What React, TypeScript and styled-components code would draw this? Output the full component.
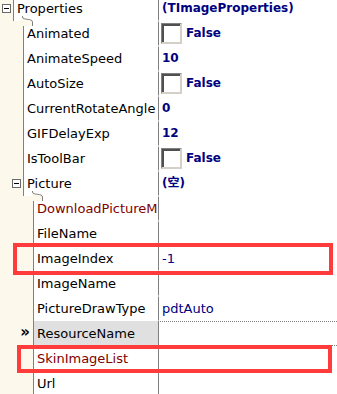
import React from "react";
import styled, { createGlobalStyle } from "styled-components";

const GlobalStyle = createGlobalStyle`
  html, body {
    margin: 0;
    padding: 0;
    background: #ffffff;
  }
  body {
    font-family: "DejaVu Sans", "Noto Sans CJK SC", sans-serif;
    font-size: 13px;
  }
`;

const Inspector = styled.div`
  position: relative;
  width: 337px;
  height: 394px;
  overflow: hidden;
  background: #ffffff;
`;

const Grid = styled.div`
  display: flex;
  flex-direction: column;
  margin-top: -4px;
`;

const Row = styled.div`
  display: flex;
  height: 25px;
  line-height: 25px;
`;

const NameSide = styled.div`
  display: flex;
  flex: 0 0 158px;
  width: 158px;
`;

const Gutter = styled.div<{ $level: number }>`
  position: relative;
  box-sizing: border-box;
  flex: 0 0 ${(p) => 13 + p.$level * 10}px;
  display: flex;
  align-items: center;
  justify-content: flex-end;
  padding-right: 2px;
  background: #fcf8ec;
`;

const Step = styled.svg`
  position: absolute;
  right: -11px;
  top: -5px;
  width: 12px;
  height: 10px;
  overflow: visible;
`;

const Expander = styled.span`
  position: relative;
  box-sizing: border-box;
  width: 9px;
  height: 9px;
  border: 1px solid #6a6a6a;
  background: #ffffff;

  &::after {
    content: "";
    position: absolute;
    left: 1px;
    right: 1px;
    top: 3px;
    height: 1px;
    background: #000000;
  }
`;

const Marker = styled.span`
  font-weight: bold;
  font-size: 15px;
  color: #000000;
  margin-right: 1px;
  line-height: 1;
  margin-top: -3px;
`;

const NameCell = styled.div<{ $red?: boolean; $selected?: boolean }>`
  flex: 1;
  min-width: 0;
  border-left: 1px solid #808080;
  padding-left: 3px;
  white-space: nowrap;
  overflow: hidden;
  color: ${(p) => (p.$red ? "#800000" : "#000000")};
  background: ${(p) => (p.$selected ? "#e0e0e0" : "#ffffff")};
`;

const ValueCell = styled.div<{ $selected?: boolean }>`
  box-sizing: border-box;
  flex: 1;
  display: flex;
  align-items: center;
  gap: 4px;
  border-left: 1px solid #808080;
  padding-left: 3px;
  white-space: nowrap;
  overflow: hidden;
  border-top: 1px dotted ${(p) => (p.$selected ? "#808080" : "transparent")};
  border-bottom: 1px dotted ${(p) => (p.$selected ? "#808080" : "transparent")};
`;

const Value = styled.span<{ $bold?: boolean }>`
  color: #000080;
  font-weight: ${(p) => (p.$bold ? "bold" : "normal")};
  font-size: ${(p) => (p.$bold ? "12px" : "13px")};
`;

const CheckBox = styled.span`
  box-sizing: border-box;
  width: 21px;
  height: 21px;
  margin-left: -1px;
  background: #ffffff;
  border-style: solid;
  border-width: 1px 2px 2px 1px;
  border-color: #808080 #d4d0c8 #d4d0c8 #808080;
  box-shadow: inset 2px 2px 0 #505050;
`;

const Annotation = styled.div<{ $top: number; $left: number; $w: number; $h: number }>`
  position: absolute;
  box-sizing: border-box;
  top: ${(p) => p.$top}px;
  left: ${(p) => p.$left}px;
  width: ${(p) => p.$w}px;
  height: ${(p) => p.$h}px;
  border: 4px solid #ff3b3b;
  pointer-events: none;
`;

type Prop = {
  name: string;
  level: number;
  value?: string;
  kind?: "bold" | "plain" | "check";
  expand?: boolean;
  red?: boolean;
  selected?: boolean;
};

const props: Prop[] = [
  { name: "Properties", level: 0, value: "(TImageProperties)", kind: "bold", expand: true },
  { name: "Animated", level: 1, value: "False", kind: "check" },
  { name: "AnimateSpeed", level: 1, value: "10", kind: "bold" },
  { name: "AutoSize", level: 1, value: "False", kind: "check" },
  { name: "CurrentRotateAngle", level: 1, value: "0", kind: "bold" },
  { name: "GIFDelayExp", level: 1, value: "12", kind: "bold" },
  { name: "IsToolBar", level: 1, value: "False", kind: "check" },
  { name: "Picture", level: 1, value: "(空)", kind: "bold", expand: true },
  { name: "DownloadPictureMode", level: 2, red: true },
  { name: "FileName", level: 2 },
  { name: "ImageIndex", level: 2, value: "-1", kind: "plain" },
  { name: "ImageName", level: 2 },
  { name: "PictureDrawType", level: 2, value: "pdtAuto", kind: "plain" },
  { name: "ResourceName", level: 2, selected: true },
  { name: "SkinImageList", level: 2, red: true },
  { name: "Url", level: 2 },
];

function StepCurve() {
  return (
    <Step viewBox="0 0 12 10">
      <path d="M0 0 H1 V1 C1 4.5 10 2 10 6 V10 H0 Z" fill="#fcf8ec" />
      <path d="M0.5 0 V1 C0.5 4.5 10.5 2 10.5 6 V10" fill="none" stroke="#808080" strokeWidth="1" />
    </Step>
  );
}

export default function App() {
  return (
    <Inspector>
      <GlobalStyle />
      <Grid>
        {props.map((p, i) => {
          const prev = props[i - 1];
          const deeper = prev !== undefined && p.level > prev.level;
          return (
            <Row key={p.name}>
              <NameSide>
                <Gutter $level={p.level}>
                  {deeper && <StepCurve />}
                  {p.expand && <Expander />}
                  {p.selected && <Marker>»</Marker>}
                </Gutter>
                <NameCell $red={p.red} $selected={p.selected}>
                  {p.name}
                </NameCell>
              </NameSide>
              <ValueCell $selected={p.selected}>
                {p.kind === "check" && <CheckBox />}
                {p.value && <Value $bold={p.kind !== "plain"}>{p.value}</Value>}
              </ValueCell>
            </Row>
          );
        })}
      </Grid>
      <Annotation $top={243} $left={13} $w={320} $h={32} />
      <Annotation $top={345} $left={17} $w={315} $h={28} />
    </Inspector>
  );
}
